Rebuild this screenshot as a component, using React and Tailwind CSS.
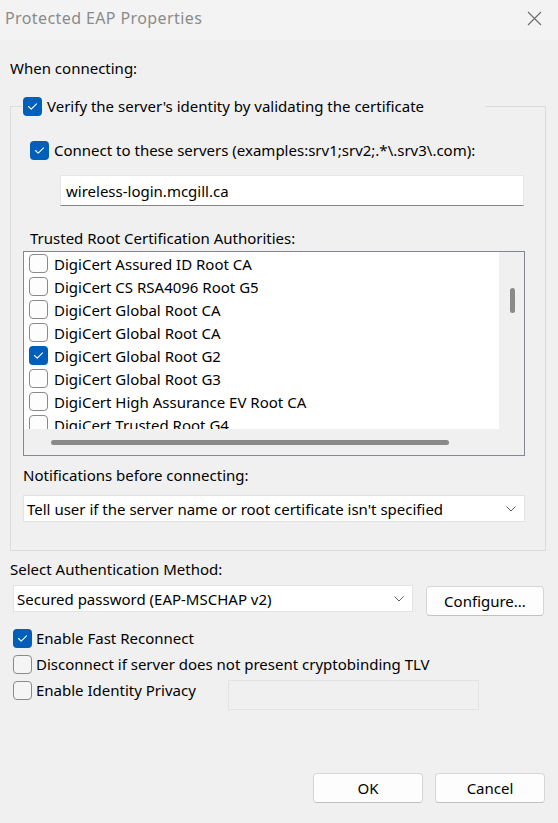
import React from "react";

function Check({ checked, white }) {
  if (checked) {
    return (
      <span className="w-[19px] h-[19px] shrink-0 rounded-[4px] bg-[#005fb8] flex items-center justify-center">
        <svg width="19" height="19" viewBox="0 0 19 19">
          <path d="M5.5 9.5 L8.2 12.2 L13.5 6.8" fill="none" stroke="white" strokeWidth="1.1" strokeLinecap="round" strokeLinejoin="round" />
        </svg>
      </span>
    );
  }
  return (
    <span
      className={
        "w-[19px] h-[19px] shrink-0 rounded-[4px] border border-[#8a8a8a] " +
        (white ? "bg-[#fdfdfd]" : "bg-[#f5f5f5]")
      }
    />
  );
}

function Chevron() {
  return (
    <svg width="12" height="8" viewBox="0 0 12 8">
      <path d="M1.5 1.5 L6 6 L10.5 1.5" fill="none" stroke="#5f5f5f" strokeWidth="1" />
    </svg>
  );
}

const certs = [
  ["DigiCert Assured ID Root CA", false],
  ["DigiCert CS RSA4096 Root G5", false],
  ["DigiCert Global Root CA", false],
  ["DigiCert Global Root CA", false],
  ["DigiCert Global Root G2", true],
  ["DigiCert Global Root G3", false],
  ["DigiCert High Assurance EV Root CA", false],
  ["DigiCert Trusted Root G4", false],
];

export default function App() {
  return (
    <div
      className="w-[558px] h-[823px] bg-[#f0f0f0] flex flex-col text-black text-[15px] leading-[20px] overflow-hidden"
      style={{ fontFamily: '"Noto Sans", sans-serif' }}
    >
      {/* Title bar */}
      <div className="h-[40px] shrink-0 bg-[#f3f3f3] flex items-center justify-between pl-[5px] pr-[16px]">
        <span className="text-[#8b8b8b] text-[16px] tracking-[0.4px] -mt-[4px]">Protected EAP Properties</span>
        <svg width="15" height="15" viewBox="0 0 15 15" className="-mt-[4px]">
          <path d="M1 1 L14 14 M14 1 L1 14" stroke="#6b6b6b" strokeWidth="1.1" />
        </svg>
      </div>

      <div className="flex flex-col px-[10px] flex-1">
        <div className="mt-[18px] h-[20px]">When connecting:</div>

        <fieldset className="mt-[17px] w-[536px] border border-[#dcdcdc] px-[12px] pb-[28px] flex flex-col">
          <legend className="-ml-[1px] w-[463px] h-[22px] flex items-center gap-[5px] pl-[1px]">
            <Check checked />
            <span>Verify the server's identity by validating the certificate</span>
          </legend>

          <div className="mt-[23px] h-[20px] flex items-center gap-[5px] pl-[7px]">
            <Check checked />
            <span>Connect to these servers (examples:srv1;srv2;.*\.srv3\.com):</span>
          </div>

          <div className="mt-[15px] ml-[37px] w-[464px] h-[31px] bg-white border border-[#e6e6e6] border-b-[#868686] flex items-center pl-[5px]">
            wireless-login.mcgill.ca
          </div>

          <div className="mt-[22px] h-[20px] pl-[7px]">Trusted Root Certification Authorities:</div>

          <div className="mt-[3px] w-[502px] h-[205px] border border-[#828790] bg-[#f0f0f0] flex flex-col">
            <div className="flex h-[177px]">
              <div className="flex-1 bg-white overflow-hidden flex flex-col pl-[5px]">
                {certs.map(([name, c], i) => (
                  <div key={i} className="h-[23px] shrink-0 flex items-center gap-[6px]">
                    <Check checked={c} white />
                    <span>{name}</span>
                  </div>
                ))}
              </div>
              <div className="w-[25px] flex justify-center pt-[36px] pl-[2px]">
                <div className="w-[5px] h-[25px] rounded-full bg-[#8a8a8a]" />
              </div>
            </div>
            <div className="h-[26px] flex items-center pl-[27px]">
              <div className="w-[398px] h-[5px] rounded-full bg-[#8a8a8a]" />
            </div>
          </div>

          <div className="mt-[9px] h-[20px]">Notifications before connecting:</div>

          <div className="mt-[10px] w-[502px] h-[27px] bg-white border border-[#e3e3e3] flex items-center justify-between pl-[3px] pr-[7px]">
            <span>Tell user if the server name or root certificate isn't specified</span>
            <Chevron />
          </div>
        </fieldset>

        <div className="mt-[8px] h-[20px]">Select Authentication Method:</div>

        <div className="mt-[6px] flex items-start">
          <div className="ml-[3px] w-[400px] h-[27px] bg-white border border-[#e3e3e3] flex items-center justify-between pl-[3px] pr-[7px]">
            <span>Secured password (EAP-MSCHAP v2)</span>
            <Chevron />
          </div>
          <button className="ml-[13px] mt-[1px] w-[118px] h-[30px] bg-[#fdfdfd] border border-[#d6d6d6] border-b-[#c2c2c2] rounded-[4px] flex items-center justify-center">
            Configure...
          </button>
        </div>

        <div className="mt-[12px] h-[20px] flex items-center gap-[4px] pl-[3px]">
          <Check checked />
          <span>Enable Fast Reconnect</span>
        </div>
        <div className="mt-[6px] h-[20px] flex items-center gap-[4px] pl-[3px]">
          <Check />
          <span>Disconnect if server does not present cryptobinding TLV</span>
        </div>
        <div className="mt-[6px] flex items-start pl-[3px]">
          <div className="h-[20px] flex items-center gap-[4px] w-[215px]">
            <Check />
            <span>Enable Identity Privacy</span>
          </div>
          <div className="w-[251px] h-[30px] border border-[#e3e3e3] bg-[#f0f0f0]" />
        </div>

        <div className="mt-auto mb-[20px] flex justify-end gap-[12px] pr-[3px]">
          <button className="w-[110px] h-[30px] bg-[#fdfdfd] border border-[#d6d6d6] border-b-[#c2c2c2] rounded-[4px] flex items-center justify-center">
            OK
          </button>
          <button className="w-[110px] h-[30px] bg-[#fdfdfd] border border-[#d6d6d6] border-b-[#c2c2c2] rounded-[4px] flex items-center justify-center">
            Cancel
          </button>
        </div>
      </div>
    </div>
  );
}
